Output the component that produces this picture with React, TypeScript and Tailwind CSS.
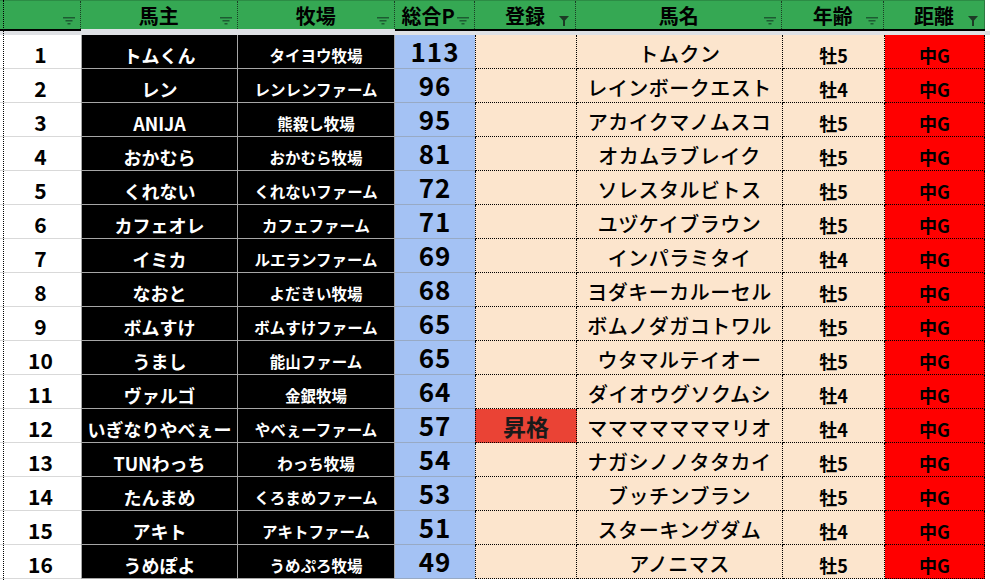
import React from "react";

type Row = {
  no: number;
  owner: string;
  farm: string;
  pts: number;
  tag?: string;
  horse: string;
  age: string;
};

const rows: Row[] = [
  { no: 1, owner: "トムくん", farm: "タイヨウ牧場", pts: 113, horse: "トムクン", age: "牡5" },
  { no: 2, owner: "レン", farm: "レンレンファーム", pts: 96, horse: "レインボークエスト", age: "牡4" },
  { no: 3, owner: "ANIJA", farm: "熊殺し牧場", pts: 95, horse: "アカイクマノムスコ", age: "牡5" },
  { no: 4, owner: "おかむら", farm: "おかむら牧場", pts: 81, horse: "オカムラブレイク", age: "牡5" },
  { no: 5, owner: "くれない", farm: "くれないファーム", pts: 72, horse: "ソレスタルビトス", age: "牡5" },
  { no: 6, owner: "カフェオレ", farm: "カフェファーム", pts: 71, horse: "ユヅケイブラウン", age: "牡5" },
  { no: 7, owner: "イミカ", farm: "ルエランファーム", pts: 69, horse: "インパラミタイ", age: "牡4" },
  { no: 8, owner: "なおと", farm: "よだきい牧場", pts: 68, horse: "ヨダキーカルーセル", age: "牡5" },
  { no: 9, owner: "ボムすけ", farm: "ボムすけファーム", pts: 65, horse: "ボムノダガコトワル", age: "牡5" },
  { no: 10, owner: "うまし", farm: "能山ファーム", pts: 65, horse: "ウタマルテイオー", age: "牡5" },
  { no: 11, owner: "ヴァルゴ", farm: "金銀牧場", pts: 64, horse: "ダイオウグソクムシ", age: "牡4" },
  { no: 12, owner: "いぎなりやべぇー", farm: "やべぇーファーム", pts: 57, tag: "昇格", horse: "マママママママリオ", age: "牡4" },
  { no: 13, owner: "TUNわっち", farm: "わっち牧場", pts: 54, horse: "ナガシノノタタカイ", age: "牡5" },
  { no: 14, owner: "たんまめ", farm: "くろまめファーム", pts: 53, horse: "ブッチンブラン", age: "牡5" },
  { no: 15, owner: "アキト", farm: "アキトファーム", pts: 51, horse: "スターキングダム", age: "牡4" },
  { no: 16, owner: "うめぽよ", farm: "うめぷろ牧場", pts: 49, horse: "アノニマス", age: "牡5" },
];

const SortIcon = () => (
  <svg width="12" height="8" viewBox="0 0 12 8" className="absolute right-[5px] top-[16px]">
    <rect x="0" y="0" width="12" height="1.5" fill="#1d5b32" />
    <rect x="2.5" y="3" width="7" height="1.5" fill="#1d5b32" />
    <rect x="4.5" y="6" width="3" height="1.5" fill="#1d5b32" />
  </svg>
);

const FunnelIcon = () => (
  <svg width="10" height="10" viewBox="0 0 10 10" className="absolute right-[6px] top-[15px]">
    <path d="M0 0 H10 L6 4.5 V10 H4 V4.5 Z" fill="#1d3b26" />
  </svg>
);

const headers = [
  { label: "", w: "w-[81px]", icon: "sort", pad: "" },
  { label: "馬主", w: "w-[157px]", icon: "sort", pad: "" },
  { label: "牧場", w: "w-[157px]", icon: "sort", pad: "" },
  { label: "総合P", w: "w-[80px]", icon: "sort", pad: "pr-[12px]" },
  { label: "登録", w: "w-[102px]", icon: "funnel", pad: "" },
  { label: "馬名", w: "w-[206px]", icon: "sort", pad: "" },
  { label: "年齢", w: "w-[102px]", icon: "sort", pad: "" },
  { label: "距離", w: "w-[100px]", icon: "funnel", pad: "" },
];

export default function App() {
  return (
    <div
      className="relative w-[990px] h-[580px] overflow-hidden bg-white text-black"
      style={{ fontFamily: '"Noto Sans CJK JP", "Noto Sans", sans-serif' }}
    >
      {/* header */}
      <div className="flex h-[29px] w-[985px] bg-[#35a853] border-t border-[#2c8c45] border-r border-r-[#2c7a40]">
        {headers.map((h, i) => (
          <div
            key={i}
            className={`${h.w} ${h.pad} relative flex items-center justify-center border-r border-dotted border-[#1b3d25] last:border-r-0`}
          >
            <span className="text-[20px] font-bold leading-none pt-[1px]">{h.label}</span>
            {h.icon === "sort" ? <SortIcon /> : <FunnelIcon />}
          </div>
        ))}
      </div>
      <div className="flex h-[2px] w-[985px]">
        <div className="w-[81px] bg-black" />
        <div className="w-[314px] bg-[#dfe1e5]" />
        <div className="flex-1 bg-black" />
      </div>
      <div className="h-[4px] w-[990px] bg-[#dfe1e5]" />

      {/* rows */}
      {rows.map((r) => (
        <div key={r.no} className="flex h-[34px] w-[985px]">
          <div className="w-[81px] flex items-center justify-center bg-white border-b border-[#d9d9d9]">
            <span className="text-[21px] font-bold leading-none pt-[6px]">{r.no}</span>
          </div>
          <div className="w-[157px] flex items-center justify-center bg-black border-b border-r border-[#a6a6a6] border-l border-l-[#a6a6a6]">
            <span className="text-[18px] font-bold text-white leading-none pt-[6px] whitespace-nowrap">{r.owner}</span>
          </div>
          <div className="w-[157px] flex items-center justify-center bg-black border-b border-r border-[#a6a6a6]">
            <span className="text-[15.5px] font-bold text-white leading-none pt-[9px] whitespace-nowrap">{r.farm}</span>
          </div>
          <div className="w-[80px] flex items-center justify-center bg-[#a4c2f4] border-b border-[#98aac4]">
            <span className="text-[26px] font-bold leading-none tracking-[1px] pb-[1px]">{r.pts}</span>
          </div>
          <div
            className={`w-[102px] flex items-center justify-center border-l border-r border-b border-dotted border-black ${
              r.tag ? "bg-[#ea4335]" : "bg-[#fce5cd]"
            }`}
          >
            {r.tag && <span className="text-[23px] font-bold leading-none text-[#1a1a1a] pt-[2px]">{r.tag}</span>}
          </div>
          <div className="w-[206px] flex items-center justify-center bg-[#fce5cd] border-b border-r border-dotted border-black">
            <span className="text-[20px] font-medium leading-none tracking-[0.5px] whitespace-nowrap pt-[4px]">{r.horse}</span>
          </div>
          <div className="w-[102px] flex items-center justify-center bg-[#fce5cd] border-b border-r border-dotted border-black">
            <span className="text-[18px] font-bold leading-none pt-[6px]">{r.age}</span>
          </div>
          <div className="w-[100px] flex items-center justify-center bg-[#ff0000] border-b border-r border-dotted border-black">
            <span className="text-[18px] font-bold leading-none pt-[6px]">中G</span>
          </div>
        </div>
      ))}

      {/* page-break line */}
      <div className="absolute left-[3px] top-0 bottom-0 border-l border-dotted border-black" />
    </div>
  );
}
